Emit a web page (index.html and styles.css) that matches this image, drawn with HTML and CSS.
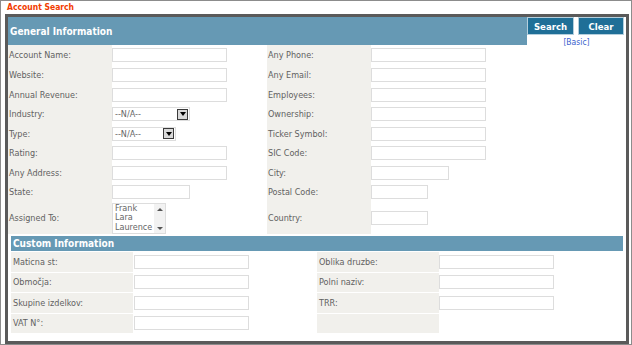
FILE: index.html
```html
<!DOCTYPE html>
<html>
<head>
<meta charset="utf-8">
<link rel="stylesheet" href="styles.css">
</head>
<body>
<div class="title">Account Search</div>
<div class="panel">
  <div class="general">
    <div class="gmain">
      <div class="gh">General Information</div>
      <div class="form">
        <div class="lbl">Account Name:</div><div class="fld"><input class="inp w115" type="text"></div>
        <div class="lbl">Any Phone:</div><div class="fld"><input class="inp w115" type="text"></div>

        <div class="lbl">Website:</div><div class="fld"><input class="inp w115" type="text"></div>
        <div class="lbl">Any Email:</div><div class="fld"><input class="inp w115" type="text"></div>

        <div class="lbl">Annual Revenue:</div><div class="fld"><input class="inp w115" type="text"></div>
        <div class="lbl">Employees:</div><div class="fld"><input class="inp w115" type="text"></div>

        <div class="lbl">Industry:</div><div class="fld"><div class="sel w78"><span class="val">--N/A--</span><span class="arr"></span></div></div>
        <div class="lbl">Ownership:</div><div class="fld"><input class="inp w115" type="text"></div>

        <div class="lbl">Type:</div><div class="fld"><div class="sel w64"><span class="val">--N/A--</span><span class="arr"></span></div></div>
        <div class="lbl">Ticker Symbol:</div><div class="fld"><input class="inp w115" type="text"></div>

        <div class="lbl">Rating:</div><div class="fld"><input class="inp w115" type="text"></div>
        <div class="lbl">SIC Code:</div><div class="fld"><input class="inp w115" type="text"></div>

        <div class="lbl">Any Address:</div><div class="fld"><input class="inp w115" type="text"></div>
        <div class="lbl">City:</div><div class="fld"><input class="inp w78" type="text"></div>

        <div class="lbl">State:</div><div class="fld"><input class="inp w78" type="text"></div>
        <div class="lbl">Postal Code:</div><div class="fld"><input class="inp w57" type="text"></div>

        <div class="lbl">Assigned To:</div>
        <div class="fld">
          <div class="lst">
            <div class="items"><div>Frank</div><div>Lara</div><div>Laurence</div></div>
            <div class="sb"><span class="up"></span><span class="dn"></span></div>
          </div>
        </div>
        <div class="lbl">Country:</div><div class="fld"><input class="inp w57" type="text"></div>
      </div>
    </div>
    <div class="actions">
      <div class="btns"><span class="btn search">Search</span><span class="btn clear">Clear</span></div>
      <a class="basic">[Basic]</a>
    </div>
  </div>
  <div class="custom">
    <div class="ch">Custom Information</div>
    <div class="cform">
      <div class="lbl c">Maticna st:</div><div class="fld cl"><input class="inp w115" type="text"></div>
      <div class="lbl c">Oblika druzbe:</div><div class="fld"><input class="inp w115" type="text"></div>

      <div class="lbl c">Območja:</div><div class="fld cl"><input class="inp w115" type="text"></div>
      <div class="lbl c">Polni naziv:</div><div class="fld"><input class="inp w115" type="text"></div>

      <div class="lbl c">Skupine izdelkov:</div><div class="fld cl"><input class="inp w115" type="text"></div>
      <div class="lbl c">TRR:</div><div class="fld"><input class="inp w115" type="text"></div>

      <div class="lbl c">VAT N°:</div><div class="fld cl"><input class="inp w115" type="text"></div>
      <div class="lbl c"></div><div class="fld"></div>
    </div>
  </div>
</div>
</body>
</html>
```

FILE: styles.css
```css
html, body {
  margin: 0;
  padding: 0;
  background: #fff;
}
body {
  width: 632px;
  height: 345px;
  box-sizing: border-box;
  border: 1px solid #8c8c8c;
  font-family: "DejaVu Sans Condensed", "DejaVu Sans", sans-serif;
  font-stretch: condensed;
  font-size: 9px;
  color: #616161;
}
.title {
  height: 13px;
  padding-left: 6px;
  color: #f23c00;
  font-weight: bold;
  font-size: 8.5px;
  line-height: 12px;
}
.panel {
  margin: 0 2px 0 4px;
  height: 330px;
  box-sizing: border-box;
  border: 3px solid #5a5a5a;
}
.general {
  display: grid;
  grid-template-columns: 519px 99px;
}
.gh {
  height: 28px;
  background: #6699b4;
  color: #fff;
  font-weight: bold;
  font-size: 10px;
  padding-left: 2px;
  display: flex;
  align-items: center;
}
.form {
  display: grid;
  grid-template-columns: 104px 155px 104px 156px;
  grid-template-rows: 20.5px repeat(7, 19.5px) 32px;
}
.lbl {
  background: #f1f0ec;
  padding-left: 1px;
  display: flex;
  align-items: center;
  white-space: nowrap;
}
.lbl.c {
  padding-left: 2px;
}
.fld {
  display: flex;
  align-items: center;
}
.fld.cl {
  padding-left: 1px;
}
.inp {
  height: 14px;
  box-sizing: border-box;
  border: 1px solid #dddddd;
  background: #fff;
  margin: 0;
  padding: 0;
  outline: none;
}
.w115 { width: 115px; }
.w78 { width: 78px; }
.w64 { width: 64px; }
.w57 { width: 57px; }

.sel {
  height: 14px;
  box-sizing: border-box;
  border: 1px solid #dddddd;
  background: #fff;
  display: flex;
  align-items: center;
  padding-right: 1px;
}
.sel .val {
  flex: 1;
  padding-left: 2px;
  color: #666;
}
.sel .arr {
  width: 11px;
  height: 11px;
  box-sizing: border-box;
  border: 1px solid #3a3a3a;
  background: #d9d9d9;
  display: flex;
  align-items: center;
  justify-content: center;
}
.sel .arr::after {
  content: "";
  width: 0;
  height: 0;
  border-left: 3px solid transparent;
  border-right: 3px solid transparent;
  border-top: 4px solid #000;
}
.lst {
  display: flex;
  width: 54px;
  height: 31px;
  box-sizing: border-box;
  border: 1px solid #dddddd;
}
.lst .items {
  flex: 1;
  padding-left: 2px;
  line-height: 9.8px;
  color: #666;
}
.lst .sb {
  width: 11px;
  background: #f2f2f2;
  display: flex;
  flex-direction: column;
  justify-content: space-between;
  align-items: center;
  padding: 4px 0 3px;
  box-sizing: border-box;
}
.lst .up, .lst .dn {
  width: 0;
  height: 0;
  border-left: 3px solid transparent;
  border-right: 3px solid transparent;
}
.lst .up { border-bottom: 3px solid #555; }
.lst .dn { border-top: 3px solid #555; }

.actions {
  display: flex;
  flex-direction: column;
  align-items: center;
}
.btns {
  display: flex;
  gap: 4px;
  align-self: flex-start;
}
.btn {
  height: 18px;
  box-sizing: border-box;
  border: 1px solid #b4cfdd;
  background: #1f6f97;
  color: #fff;
  font-weight: bold;
  font-size: 9.5px;
  display: flex;
  align-items: center;
  justify-content: center;
}
.search { width: 47px; }
.clear { width: 46px; }
.basic {
  margin-top: 2px;
  font-size: 8.5px;
  line-height: 10px;
  color: #3a5fcd;
}
.custom {
  margin: 2px 3px 0 3px;
}
.ch {
  height: 15px;
  background: #6699b4;
  color: #fff;
  font-weight: bold;
  font-size: 10px;
  padding-left: 2px;
  display: flex;
  align-items: center;
}
.cform {
  display: grid;
  grid-template-columns: 122px 184px 122px 184px;
  grid-auto-rows: 19.5px;
  row-gap: 1px;
  margin-top: 1px;
}
```
